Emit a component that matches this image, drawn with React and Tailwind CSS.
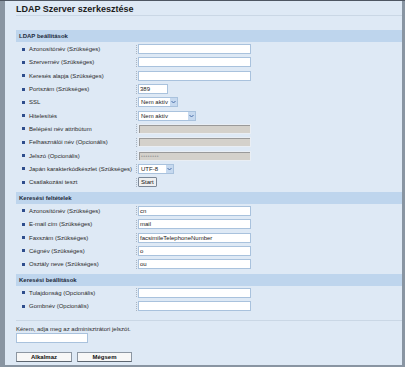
import React from 'react';

// LDAP server edit form, compact admin-panel look

const ldapRows = [
  { label: 'Azonosítónév (Szükséges)', type: 'text' },
  { label: 'Szervernév (Szükséges)', type: 'text' },
  { label: 'Keresés alapja (Szükséges)', type: 'text' },
  { label: 'Portszám (Szükséges)', type: 'text', value: '389', width: 'w-[30px]' },
  { label: 'SSL', type: 'select', value: 'Nem aktív', width: 'w-[40px]' },
  { label: 'Hitelesítés', type: 'select', value: 'Nem aktív', width: 'w-[58px]' },
  { label: 'Belépési név attribútum', type: 'disabled' },
  { label: 'Felhasználói név (Opcionális)', type: 'disabled' },
  { label: 'Jelszó (Opcionális)', type: 'disabled', value: '••••••••' },
  { label: 'Japán karakterkódkészlet (Szükséges)', type: 'select', value: 'UTF-8', width: 'w-[36px]' },
  { label: 'Csatlakozási teszt', type: 'button', value: 'Start' },
];

const searchRows = [
  { label: 'Azonosítónév (Szükséges)', type: 'text', value: 'cn' },
  { label: 'E-mail cím (Szükséges)', type: 'text', value: 'mail' },
  { label: 'Faxszám (Szükséges)', type: 'text', value: 'facsimileTelephoneNumber' },
  { label: 'Cégnév (Szükséges)', type: 'text', value: 'o' },
  { label: 'Osztály neve (Szükséges)', type: 'text', value: 'ou' },
];

const optionRows = [
  { label: 'Tulajdonság (Opcionális)', type: 'text' },
  { label: 'Gombnév (Opcionális)', type: 'text' },
];

const Field = ({ row }) => {
  if (row.type === 'select') {
    return (
      <div className={`${row.width} h-[10px] flex items-center bg-white border border-[#a9c2dd] pl-[2px]`}>
        <span className="flex-1 text-[6px] leading-[8px] text-[#222]">{row.value}</span>
        <span className="w-[7px] h-[8px] bg-[#c6d9ef] flex items-center justify-center">
          <svg width="5" height="4" viewBox="0 0 5 4">
            <path d="M0.5 1 L2.5 3 L4.5 1" fill="none" stroke="#4a6ea8" strokeWidth="1" />
          </svg>
        </span>
      </div>
    );
  }
  if (row.type === 'button') {
    return (
      <div className="h-[10px] px-[2px] flex items-center bg-[#f0f0f0] border border-[#7a8797] rounded-[1px] text-[6px] leading-[8px] text-[#111]">
        {row.value}
      </div>
    );
  }
  if (row.type === 'disabled') {
    return (
      <div className="w-[113px] h-[10px] bg-[#d4d1cb] border border-[#e9eef4] shadow-[inset_1px_1px_0_#9a9a9a] pl-[2px] text-[5px] leading-[8px] text-[#9a9a9a] tracking-[0.5px]">
        {row.value}
      </div>
    );
  }
  return (
    <div className={`${row.width || 'w-[113px]'} h-[10px] bg-white border border-[#a9c2dd] pl-[1px] text-[6px] leading-[8px] text-[#222]`}>
      {row.value}
    </div>
  );
};

const Section = ({ title, rows, className = '' }) => (
  <div className={className}>
    <div className="h-[12px] bg-[#bed5ed] pl-[3px] text-[6px] leading-[12px] font-bold text-[#1d2b3c]">
      {title}
    </div>
    <div className="pt-[0.5px] pb-[3px]">
      {rows.map((row, i) => (
        <div key={i} className="h-[13.3px] flex items-center">
          <div className="w-[120px] flex items-center pl-[6px]">
            <span className="w-[3px] h-[3px] bg-[#2e4d8c] mr-[4px]" />
            <span className="text-[6px] leading-[8px] text-[#2b2b2b] whitespace-nowrap">{row.label}</span>
          </div>
          <div className="h-[9px] border-l border-dotted border-[#a9b3bf] mr-[1px]" />
          <Field row={row} />
        </div>
      ))}
    </div>
  </div>
);

const App = () => {
  return (
    <div
      className="w-[405px] h-[367px] bg-[#8995a2] border-t border-[#4e5662] pl-[5px] pr-[3px] pb-[2px]"
      style={{ fontFamily: '"Liberation Sans", Arial, sans-serif' }}
    >
      <div className="h-full bg-[#dee9f5] pl-[11px]">
        <div className="h-[15px] pt-[3px] border-b border-[#cad7e5] text-[9px] leading-[11px] font-bold text-[#1c1c1c]">
          LDAP Szerver szerkesztése
        </div>

        <Section title="LDAP beállítások" rows={ldapRows} className="mt-[14px]" />
        <Section title="Keresési feltételek" rows={searchRows} />
        <Section title="Keresési beállítások" rows={optionRows} />

        <div className="mt-[4px] border-t border-[#cad7e5] pt-[4px]">
          <div className="text-[6px] leading-[8px] text-[#2b2b2b]">
            Kérem, adja meg az adminisztrátori jelszót.
          </div>
          <div className="w-[72px] h-[10px] bg-white border border-[#a9c2dd]" />
          <div className="flex gap-[5px] mt-[9px]">
            <button className="w-[56px] h-[10px] bg-[#f7f7f7] border border-[#8c96a2] border-b-[#5d6670] text-[6px] leading-[8px] font-bold text-[#111]">
              Alkalmaz
            </button>
            <button className="w-[55px] h-[10px] bg-[#f7f7f7] border border-[#8c96a2] border-b-[#5d6670] text-[6px] leading-[8px] font-bold text-[#111]">
              Mégsem
            </button>
          </div>
        </div>
      </div>
    </div>
  );
};

export default App;
